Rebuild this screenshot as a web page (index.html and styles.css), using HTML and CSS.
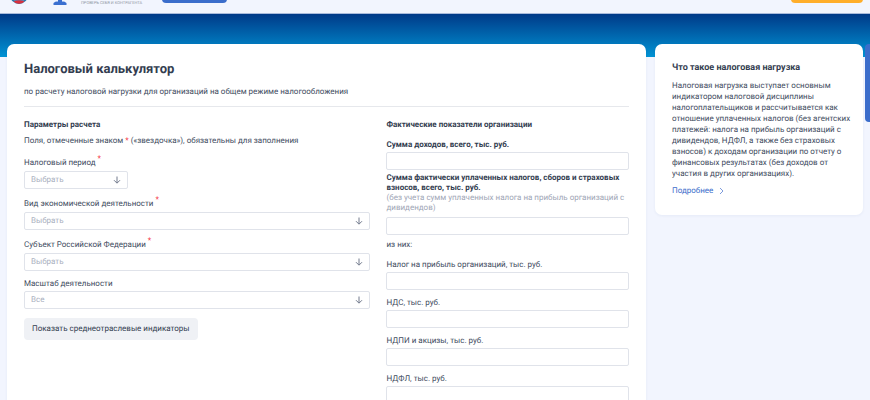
FILE: index.html
```html
<!DOCTYPE html>
<html lang="ru">
<head>
    <meta charset="UTF-8">
    <meta name="viewport" content="width=device-width, initial-scale=1.0">
    <title>Налоговый калькулятор</title>
    <link rel="stylesheet" href="styles.css">
</head>
<body>
    <header class="topbar">
        <a href="#" class="logo" aria-label="ФНС России">
            <svg width="18" height="18" viewBox="0 0 18 18">
                <circle cx="9" cy="9" r="8" fill="#fff" stroke="#2a78ad" stroke-width="2"/>
                <path d="M4 12h10v3H4z" fill="#3a98cf"/>
                <path d="M3.500 15q5.500-1.500 11 0l-2 2q-3.500 1.500-7 0z" fill="#d9303e"/>
            </svg>
        </a>
        <a href="#" class="service" aria-label="Прозрачный бизнес">
            <svg width="14" height="16" viewBox="0 0 14 16">
                <path d="M5 0h5l-1 12q3 .5 4.500 2v2H.5v-2q1.500-1.500 4.500-2z" fill="#3b6fd0"/>
                <path d="M3 12.500h2M9 12.500h2" stroke="#9db9ec" stroke-width="1"/>
            </svg>
        </a>
        <span class="slogan">ПРОВЕРЬ СЕБЯ И КОНТРАГЕНТА</span>
        <button class="topBtn" aria-label="Сервисы"></button>
        <button class="topBtn loginBtn" aria-label="Войти"></button>
    </header>
    <div class="banner"></div>

    <div class="container">
        <main class="card calculator">
            <h1>Налоговый калькулятор</h1>
            <p class="subtitle">по расчету налоговой нагрузки для организаций на общем режиме налогообложения</p>
            <form class="columns">
                <section>
                    <h2>Параметры расчета</h2>
                    <p class="note">Поля, отмеченные знаком <span class="star">*</span> («звездочка»), обязательны для заполнения</p>

                    <div class="field required short">
                        <label for="period">Налоговый период <sup>*</sup></label>
                        <div class="select">
                            <select id="period"><option>Выбрать</option></select>
                            <svg width="8" height="8" viewBox="0 0 8 8"><path d="M4 0.500v6.500M1 4.200l3 3 3-3"/></svg>
                        </div>
                    </div>
                    <div class="field required">
                        <label for="activity">Вид экономической деятельности <sup>*</sup></label>
                        <div class="select">
                            <select id="activity"><option>Выбрать</option></select>
                            <svg width="8" height="8" viewBox="0 0 8 8"><path d="M4 0.500v6.500M1 4.200l3 3 3-3"/></svg>
                        </div>
                    </div>
                    <div class="field required">
                        <label for="region">Субъект Российской Федерации <sup>*</sup></label>
                        <div class="select">
                            <select id="region"><option>Выбрать</option></select>
                            <svg width="8" height="8" viewBox="0 0 8 8"><path d="M4 0.500v6.500M1 4.200l3 3 3-3"/></svg>
                        </div>
                    </div>
                    <div class="field">
                        <label for="scale">Масштаб деятельности</label>
                        <div class="select">
                            <select id="scale"><option>Все</option></select>
                            <svg width="8" height="8" viewBox="0 0 8 8"><path d="M4 0.500v6.500M1 4.200l3 3 3-3"/></svg>
                        </div>
                    </div>
                    <button type="button" class="showBtn">Показать среднеотраслевые индикаторы</button>
                </section>

                <section>
                    <h2 class="factTitle">Фактические показатели организации</h2>
                    <div class="field total">
                        <label for="income">Сумма доходов, всего, тыс. руб.</label>
                        <input type="text" id="income">
                    </div>
                    <div class="field total long">
                        <label for="taxes">Сумма фактически уплаченных налогов, сборов и страховых взносов, всего, тыс. руб.
                            <span class="hint">(без учета сумм уплаченных налога на прибыль организаций с дивидендов)</span></label>
                        <input type="text" id="taxes">
                    </div>
                    <p class="note">из них:</p>
                    <div class="field">
                        <label for="profit">Налог на прибыль организаций, тыс. руб.</label>
                        <input type="text" id="profit">
                    </div>
                    <div class="field">
                        <label for="nds">НДС, тыс. руб.</label>
                        <input type="text" id="nds">
                    </div>
                    <div class="field">
                        <label for="ndpi">НДПИ и акцизы, тыс. руб.</label>
                        <input type="text" id="ndpi">
                    </div>
                    <div class="field">
                        <label for="ndfl">НДФЛ, тыс. руб.</label>
                        <input type="text" id="ndfl">
                    </div>
                </section>
            </form>
        </main>

        <aside class="card about">
            <h2>Что такое налоговая нагрузка</h2>
            <p>Налоговая нагрузка выступает основным индикатором налоговой дисциплины налогоплательщиков и рассчитывается как отношение уплаченных налогов (без агентских платежей: налога на прибыль организаций с дивидендов, НДФЛ, а также без страховых взносов) к доходам организации по отчету о финансовых результатах (без доходов от участия в других организациях).</p>
            <a href="#" class="more">Подробнее
                <svg width="5" height="8" viewBox="0 0 5 8"><path d="M1 1l3 3-3 3"/></svg>
            </a>
        </aside>
    </div>
    <button class="sideTab" aria-label="Обратная связь"></button>
</body>
</html>
```
FILE: styles.css
```css
* {
    box-sizing: border-box;
}
body {
    margin: 0;
    background: #f2f5fe;
    color: #414b5e;
    font-family: Roboto, "Liberation Sans", sans-serif;
    font-size: 8px;
    line-height: 12px;
    text-rendering: geometricPrecision;
}
h1, h2, p {
    margin: 0;
}
button, input, select {
    font: inherit;
    text-rendering: inherit;
}

/* header */
.topbar {
    display: flex;
    align-items: flex-end;
    height: 14px;
    padding: 0 7px 9px 10px;
    overflow: hidden;
    border-bottom: 1px solid #a9bbdc;
}
.topbar svg {
    display: block;
}
.service {
    margin-left: 25px;
    margin-bottom: -1px;
}
.slogan {
    margin: 0 20px -2px 14px;
    font-size: 4px;
    line-height: 6px;
    color: #8d93a0;
    white-space: nowrap;
}
.topBtn {
    width: 65px;
    height: 18px;
    margin-bottom: 1px;
    border: none;
    border-radius: 4px;
    background: #3b6dcb;
    cursor: pointer;
}
.loginBtn {
    width: 72px;
    margin-left: auto;
    background: #ffae2b;
}
.banner {
    height: 43px;
    background: linear-gradient(#003a88, #0093d4);
}

/* layout */
.container {
    display: grid;
    grid-template-columns: 1fr 208px;
    gap: 9px;
    align-items: start;
    margin-top: -13px;
    padding: 0 7px;
}
.card {
    background: #fff;
    border-radius: 7px;
    box-shadow: 0 1px 3px rgba(40, 70, 140, 0.06);
}
.calculator {
    padding: 16px 17px;
}
.columns {
    display: grid;
    grid-template-columns: 10fr 7fr;
    gap: 16px;
    padding-top: 12px;
    border-top: 1px solid #e6e8ec;
}
h1 {
    font-size: 13px;
    line-height: 20px;
    color: #333d50;
}
h2 {
    font-size: 8px;
    line-height: 12px;
    color: #333d50;
}
.subtitle {
    margin: 6px 0 8px;
}
.note {
    margin: 4px 0 8px;
}
.star, sup {
    color: #f5333f;
}
.factTitle {
    margin-bottom: 8px;
}

/* form */
.field {
    margin-bottom: 7px;
}
.field label {
    display: block;
    margin-bottom: 1px;
}
.required label {
    padding-top: 2px;
    margin-bottom: 2px;
}
.required sup {
    font-size: 8px;
    line-height: 0;
}
.short .select {
    width: 104px;
}
.total {
    margin-bottom: 3px;
}
.total label {
    font-weight: bold;
    color: #333d50;
}
.long label {
    margin-bottom: 4px;
    line-height: 10px;
}
.hint {
    display: block;
    font-weight: normal;
    color: #a0a6b6;
}
.field input, .field select {
    display: block;
    width: 100%;
    height: 18px;
    padding: 0 6px;
    border: 1px solid #e0e3ea;
    border-radius: 2px;
    background: #fff;
    color: #414b5e;
}
.field select {
    appearance: none;
    color: #a9afbe;
}
.select {
    position: relative;
}
.select svg {
    position: absolute;
    top: 5px;
    right: 7px;
    fill: none;
    stroke: #737b8d;
    pointer-events: none;
}
.showBtn {
    display: block;
    margin-top: 9px;
    padding: 5px 8px;
    border: none;
    border-radius: 4px;
    background: #eff1f5;
    color: #333d50;
    cursor: pointer;
}

/* sidebar */
.about {
    padding: 18px 11px 18px 17px;
}
.about h2 {
    margin-bottom: 6px;
    font-size: 9px;
}
.about p {
    margin-bottom: 6px;
    line-height: 11px;
}
.more {
    display: flex;
    align-items: center;
    gap: 6px;
    color: #3b6dcb;
    text-decoration: none;
}
.more svg {
    fill: none;
    stroke: #7d9bdc;
}
.sideTab {
    position: fixed;
    top: 44px;
    right: 0;
    width: 5px;
    height: 78px;
    padding: 0;
    border: none;
    border-radius: 4px 0 0 4px;
    background: #3b6dcb;
}
```
